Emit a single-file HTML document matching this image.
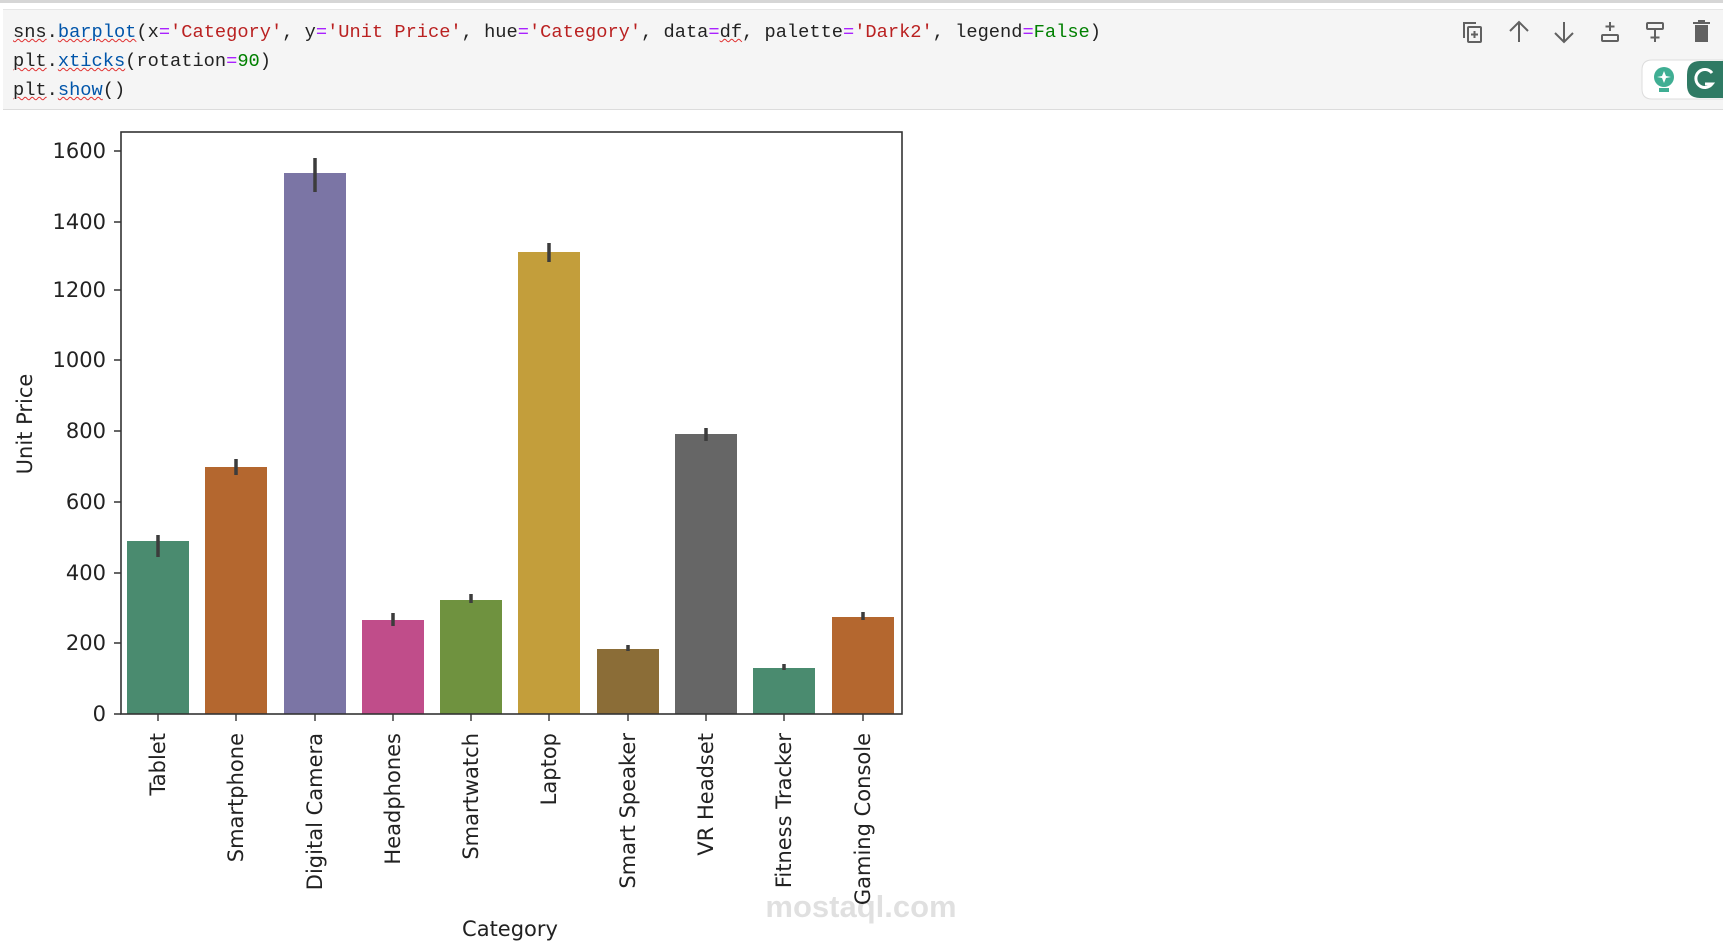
<!DOCTYPE html>
<html><head><meta charset="utf-8"><style>
html,body{margin:0;padding:0;background:#fff;width:1723px;height:944px;overflow:hidden}
.top{position:absolute;left:0;top:0;width:1723px;height:3px;background:#d6d6d6}
.cell{position:absolute;left:3px;top:9px;width:1720px;height:99px;background:#f5f5f5;border-bottom:1px solid #dcdcdc;border-top:1px solid #e6e6e6}
.code{position:absolute;left:10px;top:8px;font-family:"Liberation Mono",monospace;font-size:18.7px;line-height:29px;color:#222;white-space:pre}
.s{color:#ba2121}.k{color:#008000}.n{color:#0055aa}.o{color:#aa22ff}.u{text-decoration:underline wavy #e03030;text-decoration-thickness:1px}
svg{position:absolute;left:0;top:0}
</style></head><body>
<div class="top"></div>
<div class="cell"><div class="code"><span class="u">sns</span>.<span class="u n">barplot</span>(x<span class="o">=</span><span class="s">'Category'</span>, y<span class="o">=</span><span class="s">'Unit Price'</span>, hue<span class="o">=</span><span class="s">'Category'</span>, data<span class="o">=</span><span class="u">df</span>, palette<span class="o">=</span><span class="s">'Dark2'</span>, legend<span class="o">=</span><span class="k">False</span>)
<span class="u">plt</span>.<span class="u n">xticks</span>(rotation<span class="o">=</span><span class="k">90</span>)
<span class="u">plt</span>.<span class="u n">show</span>()</div></div>
<svg width="1723" height="944" viewBox="0 0 1723 944" font-family="DejaVu Sans, sans-serif">
<g stroke="#616161" stroke-width="2" fill="none">
<rect x="1468" y="27" width="13" height="15" rx="1"/><path d="M1464 38V23h12"/><path d="M1474.5 31v7M1471 34.5h7"/>
<path d="M1519 42V22M1510 31l9-9 9 9"/>
<path d="M1564 22v20M1555 33l9 9 9-9"/>
<path d="M1610 22v9M1605.5 26.5h9"/><rect x="1602" y="35" width="16" height="6" rx="1"/>
<rect x="1647" y="23" width="16" height="6" rx="1"/><path d="M1655 29v13M1650.5 37.5h9"/>
</g>
<path d="M1695 25h13v17h-13z" fill="#616161"/><path d="M1693 23h17M1698 21h7" stroke="#616161" stroke-width="2"/>
<path d="M1652 60h71v39h-71q-10 0-10-10v-19q0-10 10-10z" fill="#fff" stroke="#ddd"/>
<circle cx="1664" cy="77" r="10" fill="#3fae93"/><rect x="1659" y="88" width="10" height="4" fill="#3fae93"/>
<path d="M1664 71l2 5 5 1-5 1-2 5-2-5-5-1 5-1z" fill="#fff"/>
<path d="M1700 61h23v37h-23q-13 0-13-13v-10q0-14 13-14z" fill="#2f7a64"/>
<path d="M1712 73a9 9 0 1 0 0 11h-7" stroke="#fff" stroke-width="3" fill="none"/>
<g>
<rect x="127" y="541" width="62" height="173" fill="#4a8b6f"/>
<rect x="205" y="467" width="62" height="247" fill="#b4672f"/>
<rect x="284" y="173" width="62" height="541" fill="#7b75a5"/>
<rect x="362" y="620" width="62" height="94" fill="#c04d8a"/>
<rect x="440" y="600" width="62" height="114" fill="#6f923f"/>
<rect x="518" y="252" width="62" height="462" fill="#c39e3b"/>
<rect x="597" y="649" width="62" height="65" fill="#8b6d37"/>
<rect x="675" y="434" width="62" height="280" fill="#666666"/>
<rect x="753" y="668" width="62" height="46" fill="#4a8b6f"/>
<rect x="832" y="617" width="62" height="97" fill="#b4672f"/>
</g>
<g stroke="#3c3c3c" stroke-width="3.5">
<path d="M158 535v22M236 459v16M315 158v34M393 613v13M471 594v9M549 243v19M628 645v6M706 428v13M784 664v6M863 612v8"/>
</g>
<rect x="121" y="132" width="781" height="582" fill="none" stroke="#333" stroke-width="1.6"/>
<g stroke="#333" stroke-width="1.4">
<path d="M114 714h7M114 643h7M114 573h7M114 502h7M114 431h7M114 360h7M114 290h7M114 222h7M114 151h7"/>
<path d="M158 714v7M236 714v7M315 714v7M393 714v7M471 714v7M549 714v7M628 714v7M706 714v7M784 714v7M863 714v7"/>
</g>
<g font-size="21" fill="#222" text-anchor="end">
<text x="106" y="721">0</text><text x="106" y="650">200</text><text x="106" y="580">400</text><text x="106" y="509">600</text><text x="106" y="438">800</text><text x="106" y="367">1000</text><text x="106" y="297">1200</text><text x="106" y="229">1400</text><text x="106" y="158">1600</text>
</g>
<g font-size="21" fill="#222" text-anchor="end">
<text transform="translate(165,733) rotate(-90)">Tablet</text>
<text transform="translate(243,733) rotate(-90)">Smartphone</text>
<text transform="translate(322,733) rotate(-90)">Digital Camera</text>
<text transform="translate(400,733) rotate(-90)">Headphones</text>
<text transform="translate(478,733) rotate(-90)">Smartwatch</text>
<text transform="translate(556,733) rotate(-90)">Laptop</text>
<text transform="translate(635,733) rotate(-90)">Smart Speaker</text>
<text transform="translate(713,733) rotate(-90)">VR Headset</text>
<text transform="translate(791,733) rotate(-90)">Fitness Tracker</text>
<text transform="translate(870,733) rotate(-90)">Gaming Console</text>
</g>
<text x="510" y="936" font-size="21" fill="#222" text-anchor="middle">Category</text>
<text transform="translate(32,424) rotate(-90)" font-size="21" fill="#222" text-anchor="middle">Unit Price</text>
<text x="861" y="917" font-size="31" fill="#000" fill-opacity="0.12" text-anchor="middle" font-family="Liberation Sans, sans-serif" font-weight="bold">mostaql.com</text>
</svg>
</body></html>
